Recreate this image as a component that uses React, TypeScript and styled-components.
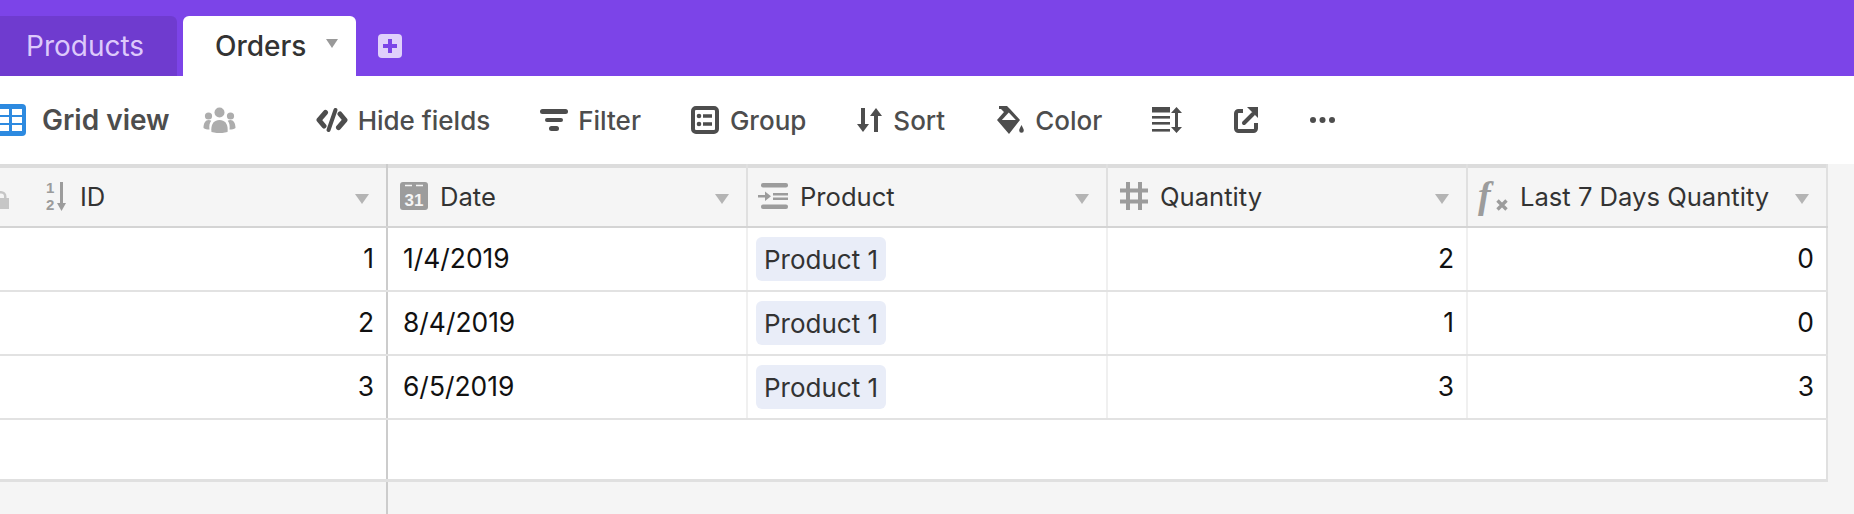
import React, { FC } from 'react';
import styled, { createGlobalStyle } from 'styled-components';

const GlobalStyle = createGlobalStyle`
    html, body {
        margin: 0;
        padding: 0;
        background: #ffffff;
    }
    body {
        font-family: Inter, "Liberation Sans", sans-serif;
    }
`;

const DARK = '#4d4d4d';
const GREY = '#9c9c9c';

const GridIcon: FC = () => (
    <svg width="32" height="32" viewBox="0 0 32 32">
        <rect width="32" height="32" rx="4" fill="#2d8ae0" />
        <path
            d="M6 5h9v6H6zM18 5h10v6H18zM6 13h9v6H6zM18 13h10v6H18zM6 21h9v6H6zM18 21h10v6H18z"
            fill="#fff"
        />
    </svg>
);

const PeopleIcon: FC = () => (
    <svg width="33" height="26" viewBox="0 0 32 26" fill="#adadad">
        <circle cx="16" cy="5.5" r="5" />
        <circle cx="5" cy="9" r="3.6" />
        <circle cx="27" cy="9" r="3.6" />
        <path d="M8 25c-1-7 2-12 8-12s9 5 8 12c-5 1.500-11 1.500-16 0z" />
        <path d="M0 21c0-5 2-8 5-8 1.200 0 2 .3 2.800.8C6 16 5.500 19 6 22.500c-2.500 0-4.500-.5-6-1.500z" />
        <path d="M32 21c0-5-2-8-5-8-1.200 0-2 .3-2.800.8C26 16 26.500 19 26 22.500c2.500 0 4.500-.5 6-1.500z" />
    </svg>
);

const HideIcon: FC = () => (
    <svg width="32" height="26" viewBox="0 0 32 26" fill="none" stroke={DARK} strokeWidth="5" strokeLinecap="round" strokeLinejoin="round">
        <path d="M9.500 5.500L3 13l5 6" />
        <path d="M22.500 20.500L29 13l-5-6" />
        <path d="M19.500 3L12.500 23" strokeWidth="4" />
    </svg>
);

const FilterIcon: FC = () => (
    <svg width="28" height="22" viewBox="0 0 28 22" fill={DARK}>
        <rect y="0" width="28" height="5" rx="2.500" />
        <rect x="5" y="9" width="18" height="4" rx="2" />
        <rect x="9" y="17" width="10" height="5" rx="2.500" />
    </svg>
);

const GroupIcon: FC = () => (
    <svg width="28" height="28" viewBox="0 0 28 28" fill="none" stroke={DARK}>
        <rect x="2" y="2" width="24" height="24" rx="3" strokeWidth="4" />
        <path d="M12 10h9M12 18h9" strokeWidth="3.400" />
        <circle cx="8" cy="10" r="2.300" fill={DARK} stroke="none" />
        <circle cx="8" cy="18" r="2.300" fill={DARK} stroke="none" />
    </svg>
);

const SortIcon: FC = () => (
    <svg width="25" height="26" viewBox="0 0 25 26" fill={DARK}>
        <path d="M4 1h4v16h4L6 25 0 17h4z" />
        <path d="M17 25h4V9h4L19 1l-6 8h4z" />
    </svg>
);

const ColorIcon: FC = () => (
    <svg width="28" height="28" viewBox="0 0 28 28" fill={DARK}>
        <path d="M3 0h8l3 3 10 11-11 14L1 14l7-8-3-3H3z" />
        <path d="M12.800 6.500l7 7.500H5.800z" fill="#fff" />
        <path d="M25.500 19c1.300 2.500 2.300 4 2.300 5.500a2.300 2.300 0 0 1-4.600 0c0-1.500 1-3 2.300-5.500z" />
    </svg>
);

const RowHeightIcon: FC = () => (
    <svg width="30" height="26" viewBox="0 0 30 26" fill={DARK}>
        <rect y="0" width="18" height="5.500" />
        <rect y="9" width="18" height="2.600" />
        <rect y="15" width="18" height="2.600" />
        <rect y="22" width="18" height="2.600" />
        <path d="M24.500 0L30 6h-4v14h4l-5.500 6L19 20h4V6h-4z" />
    </svg>
);

const ShareIcon: FC = () => (
    <svg width="24" height="26" viewBox="0 0 24 26" fill="none" stroke={DARK} strokeWidth="4">
        <path d="M9 4H4.500A2.500 2.500 0 0 0 2 6.500v15A2.500 2.500 0 0 0 4.500 24h15a2.500 2.500 0 0 0 2.500-2.500V16" />
        <path d="M10 16L19 7" strokeLinecap="round" />
        <path d="M13 0h11v11z" fill={DARK} stroke="none" />
    </svg>
);

const MoreIcon: FC = () => (
    <svg width="25" height="6" viewBox="0 0 25 6" fill={DARK}>
        <circle cx="3" cy="3" r="3" />
        <circle cx="12.500" cy="3" r="3" />
        <circle cx="22" cy="3" r="3" />
    </svg>
);

const LockIcon: FC = () => (
    <svg width="20" height="18" viewBox="0 0 20 18" fill="#c6c6c6">
        <path d="M2 7h2.500V5.500a5.500 5.500 0 0 1 11 0V7H18v11H2zM7 7h6V5.500a3 3 0 0 0-6 0z" fillRule="evenodd" />
    </svg>
);

const IconLabel = styled.text`
    font-family: "Liberation Sans", sans-serif;
    font-weight: 700;
`;

const NumberIcon: FC = () => (
    <NumberGlyph>
        <NumberDigits>
            <span>1</span>
            <span>2</span>
        </NumberDigits>
        <svg width="9" height="29" viewBox="0 0 9 29" fill={GREY}>
            <path d="M3 0h3v21h3l-4.500 8L0 21h3z" />
        </svg>
    </NumberGlyph>
);

const DateIcon: FC = () => (
    <svg width="28" height="28" viewBox="0 0 28 28">
        <rect width="28" height="28" rx="3" fill={GREY} />
        <path d="M5 3.500h7M16 3.500h7" stroke="#f5f5f5" strokeWidth="1.600" />
        <IconLabel x="14" y="24" fontSize="17" fill="#f5f5f5" textAnchor="middle">31</IconLabel>
    </svg>
);

const LinkIcon: FC = () => (
    <svg width="30" height="26" viewBox="0 0 30 26" fill={GREY}>
        <rect x="3" y="0" width="27" height="4.500" rx="2" />
        <rect x="3" y="21.500" width="27" height="4.500" rx="2" />
        <rect x="15" y="10" width="15" height="2.500" />
        <rect x="15" y="14.500" width="15" height="2.500" />
        <path d="M0 12h7V8.500l6 4.800-6 4.700V14.500H0z" />
    </svg>
);

const HashIcon: FC = () => (
    <svg width="28" height="28" viewBox="0 0 28 28" fill="none" stroke={GREY} strokeWidth="4">
        <path d="M8 0v28M20 0v28M0 8.500h28M0 19.500h28" />
    </svg>
);

const FormulaIcon: FC = () => (
    <FormulaGlyph>
        <FormulaLetter>f</FormulaLetter>
        <svg width="12" height="12" viewBox="0 0 12 12">
            <path d="M1.500 1.500l9 9M10.500 1.500l-9 9" stroke={GREY} strokeWidth="3.400" />
        </svg>
    </FormulaGlyph>
);

const PlusIcon: FC = () => (
    <svg width="24" height="24" viewBox="0 0 24 24">
        <rect width="24" height="24" rx="4" fill="#e0d0fb" />
        <path d="M12 5v14M5 12h14" stroke="#7c44e8" strokeWidth="4" />
    </svg>
);

const App: FC = () => {
    const rows = [
        { id: 1, date: '1/4/2019', quantity: 2, last: 0 },
        { id: 2, date: '8/4/2019', quantity: 1, last: 0 },
        { id: 3, date: '6/5/2019', quantity: 3, last: 3 },
    ];

    return (
        <Page>
            <GlobalStyle />
            <TabBar>
                <InactiveTab>Products</InactiveTab>
                <ActiveTab>
                    Orders
                    <TabCaret />
                </ActiveTab>
                <AddTab>
                    <PlusIcon />
                </AddTab>
            </TabBar>
            <Toolbar>
                <ViewName>
                    <ViewIcon>
                        <GridIcon />
                    </ViewIcon>
                    <ViewTitle>Grid view</ViewTitle>
                    <PeopleIcon />
                </ViewName>
                <ToolItem $gap={10}><HideIcon />Hide fields</ToolItem>
                <ToolItem $gap={10}><FilterIcon />Filter</ToolItem>
                <ToolItem><GroupIcon />Group</ToolItem>
                <ToolItem $shift={1}><SortIcon />Sort</ToolItem>
                <ToolItem $shift={1}><ColorIcon />Color</ToolItem>
                <ToolItem><RowHeightIcon /></ToolItem>
                <ToolItem $shift={2}><ShareIcon /></ToolItem>
                <ToolItem $shift={2}><MoreIcon /></ToolItem>
            </Toolbar>
            <HeaderRow>
                <HeaderCell $frozen>
                    <LockSlot><LockIcon /></LockSlot>
                    <NumberIcon />
                    <HeaderLabel>ID</HeaderLabel>
                    <Caret />
                </HeaderCell>
                <HeaderCell>
                    <DateIcon />
                    <HeaderLabel>Date</HeaderLabel>
                    <Caret />
                </HeaderCell>
                <HeaderCell $tight>
                    <LinkIcon />
                    <HeaderLabel>Product</HeaderLabel>
                    <Caret />
                </HeaderCell>
                <HeaderCell>
                    <HashIcon />
                    <HeaderLabel>Quantity</HeaderLabel>
                    <Caret />
                </HeaderCell>
                <HeaderCell $tight>
                    <FormulaIcon />
                    <HeaderLabel>Last 7 Days Quantity</HeaderLabel>
                    <Caret />
                </HeaderCell>
            </HeaderRow>
            {rows.map((row) => (
                <DataRow key={row.id}>
                    <Cell $frozen $number>{row.id}</Cell>
                    <Cell>{row.date}</Cell>
                    <PillCell><Pill>Product 1</Pill></PillCell>
                    <Cell $number>{row.quantity}</Cell>
                    <Cell $number>{row.last}</Cell>
                </DataRow>
            ))}
            <BlankRow>
                <BlankCell $frozen />
                <BlankCell />
            </BlankRow>
            <Rest />
        </Page>
    );
};

const NumberGlyph = styled.span`
    width: 20px;
    display: flex;
    align-items: center;
    justify-content: space-between;
`;

const NumberDigits = styled.span`
    display: flex;
    flex-direction: column;
    font-family: "Liberation Sans", sans-serif;
    font-size: 15px;
    font-weight: 700;
    line-height: 17px;
    color: ${GREY};
`;

const FormulaGlyph = styled.span`
    width: 30px;
    height: 34px;
    display: flex;
    align-items: flex-end;
    justify-content: space-between;
    padding-bottom: 2px;
    box-sizing: border-box;
`;

const FormulaLetter = styled.span`
    font-family: "Liberation Serif", serif;
    font-size: 38px;
    font-style: italic;
    font-weight: 700;
    line-height: 32px;
    color: ${GREY};
`;

const Page = styled.div`
    width: 1854px;
    height: 514px;
    overflow: hidden;
    display: flex;
    flex-direction: column;
    background: #f5f5f5;
`;

const TabBar = styled.div`
    height: 60px;
    padding-top: 16px;
    display: flex;
    background: #7c44e8;
`;

const InactiveTab = styled.div`
    width: 151px;
    padding-left: 26px;
    margin-right: 6px;
    border-radius: 0 6px 0 0;
    display: flex;
    align-items: center;
    font-size: 28px;
    color: #ddc9fb;
    background: #6f3bcf;
`;

const ActiveTab = styled.div`
    width: 173px;
    padding-left: 32px;
    box-sizing: border-box;
    border-radius: 6px 6px 0 0;
    display: flex;
    align-items: center;
    font-size: 28px;
    font-weight: 500;
    color: #333333;
    background: #ffffff;
`;

const TabCaret = styled.span`
    margin-left: 20px;
    margin-bottom: 6px;
    border-style: solid;
    border-width: 9px 6px 0;
    border-color: #999999 transparent transparent;
`;

const AddTab = styled.div`
    margin-left: 22px;
    display: flex;
    align-items: center;
`;

const Toolbar = styled.div`
    height: 88px;
    display: flex;
    align-items: center;
    gap: 50px;
    background: #ffffff;
`;

const ViewName = styled.div`
    margin-right: 30px;
    display: flex;
    align-items: center;
`;

const ViewIcon = styled.div`
    margin-left: -6px;
    margin-right: 16px;
    display: flex;
`;

const ViewTitle = styled.div`
    margin-right: 33px;
    font-size: 28px;
    font-weight: 600;
    color: ${DARK};
`;

const ToolItem = styled.div<{ $shift?: number; $gap?: number }>`
    margin-left: ${({ $shift }) => $shift ?? 0}px;
    display: flex;
    align-items: center;
    gap: ${({ $gap }) => $gap ?? 11}px;
    font-size: 26px;
    font-weight: 500;
    color: ${DARK};
`;

const gridColumns = 'grid-template-columns: 388px repeat(4, 360px);';

const HeaderRow = styled.div`
    height: 64px;
    width: 1828px;
    display: grid;
    ${gridColumns}
    border-bottom: 2px solid #d4d4d4;
    box-sizing: border-box;
`;

const HeaderCell = styled.div<{ $frozen?: boolean; $tight?: boolean }>`
    position: relative;
    padding: 2px 0 0 ${({ $frozen, $tight }) => ($frozen ? '46px' : $tight ? '10px' : '12px')};
    display: flex;
    align-items: center;
    gap: ${({ $frozen }) => ($frozen ? '14px' : '12px')};
    box-sizing: border-box;
    border-right: 2px solid ${({ $frozen }) => ($frozen ? '#cccccc' : '#e0e0e0')};
    background: linear-gradient(#dcdcdc 4px, #f5f5f5 4px);
`;

const LockSlot = styled.span`
    position: absolute;
    left: -9px;
    top: 27px;
    display: flex;
`;

const HeaderLabel = styled.span`
    font-size: 25.6px;
    color: #333333;
`;

const Caret = styled.span`
    position: absolute;
    right: 17px;
    top: 30px;
    border-style: solid;
    border-width: 10px 7px 0;
    border-color: #b4b4b4 transparent transparent;
`;

const DataRow = styled.div`
    height: 64px;
    width: 1828px;
    display: grid;
    ${gridColumns}
    box-sizing: border-box;
    border-bottom: 2px solid #e2e2e2;
    background: #ffffff;
`;

const Cell = styled.div<{ $frozen?: boolean; $number?: boolean }>`
    padding: 0 12px 2px 15px;
    display: flex;
    align-items: center;
    justify-content: ${({ $number }) => ($number ? 'flex-end' : 'flex-start')};
    box-sizing: border-box;
    font-size: 26.4px;
    color: #111111;
    border-right: 2px solid ${({ $frozen }) => ($frozen ? '#cccccc' : '#f0f0f0')};
    &:last-child {
        border-right-color: #e0e0e0;
    }
`;

const PillCell = styled(Cell)`
    padding-left: 8px;
    padding-bottom: 0;
`;

const Pill = styled.span`
    height: 44px;
    padding: 0 8px;
    display: flex;
    align-items: center;
    border-radius: 6px;
    font-size: 26px;
    color: #333333;
    background: #e9edf8;
`;

const BlankRow = styled.div`
    height: 62px;
    width: 1828px;
    display: grid;
    grid-template-columns: 388px 1440px;
    box-sizing: border-box;
    border-bottom: 3px solid #e0e0e0;
    background: #ffffff;
`;

const BlankCell = styled.div<{ $frozen?: boolean }>`
    border-right: 2px solid ${({ $frozen }) => ($frozen ? '#cccccc' : '#e0e0e0')};
`;

const Rest = styled.div`
    width: 388px;
    flex: 1;
    box-sizing: border-box;
    border-right: 2px solid #cccccc;
`;

export default App;
